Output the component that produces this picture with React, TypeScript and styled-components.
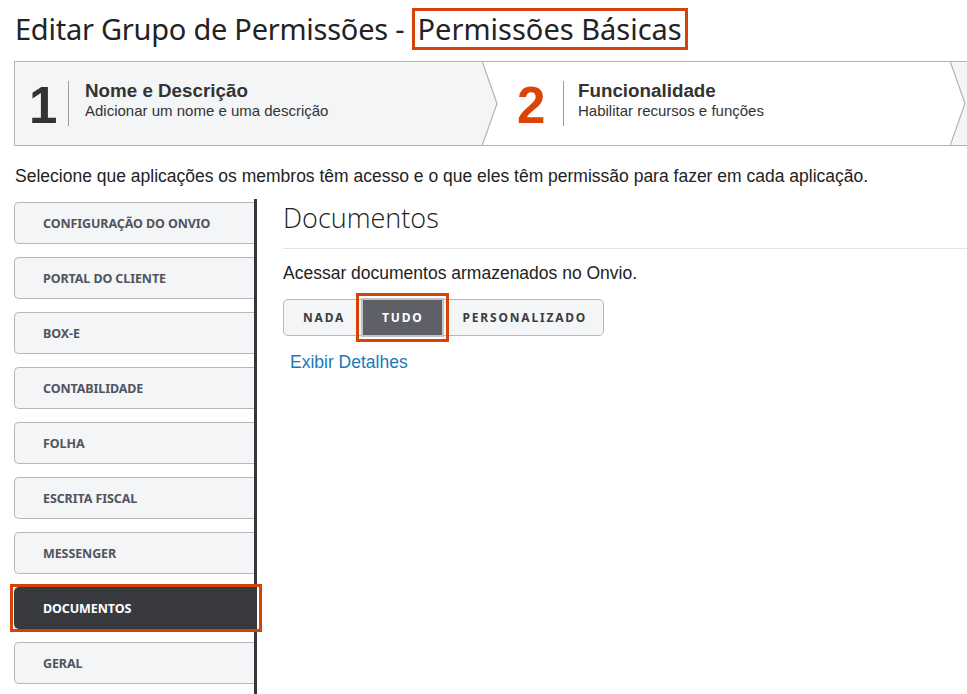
import React from "react";
import styled, { createGlobalStyle } from "styled-components";

const Global = createGlobalStyle`
  html, body { margin: 0; padding: 0; background: #fff; }
  body { font-family: "Liberation Sans", Arial, sans-serif; color: #222; }
  * { box-sizing: border-box; }
`;

const ORANGE = "#d64309";

const Page = styled.div`
  padding: 8px 0 0 14px;
  width: 967px;
  height: 694px;
  overflow: hidden;
`;

const Title = styled.h1`
  margin: 0;
  padding-left: 1px;
  font-family: "Noto Sans", "Open Sans", sans-serif;
  font-weight: 400;
  font-size: 29px;
  letter-spacing: -0.25px;
  line-height: 36px;
  color: #232323;
  white-space: nowrap;
`;

const Highlight = styled.span`
  display: inline-block;
  border: 3px solid ${ORANGE};
  padding: 0 3px;
  letter-spacing: 0;
  line-height: 36px;
`;

const Stepper = styled.div`
  display: flex;
  margin-top: 11px;
  height: 85px;
  border-top: 1px solid #b3b3b6;
  border-bottom: 1px solid #b3b3b6;
  border-left: 1px solid #b3b3b6;
`;

const Step = styled.div<{ $bg: string; $width?: number; $pad: number }>`
  display: flex;
  align-items: center;
  background: ${(p) => p.$bg};
  ${(p) => (p.$width ? `width: ${p.$width}px; flex: none;` : "flex: 1;")}
  padding-left: ${(p) => p.$pad}px;
`;

const StepNumber = styled.div<{ $color: string; $w: number }>`
  width: ${(p) => p.$w}px;
  flex: none;
  font-family: "Liberation Sans", Arial, sans-serif;
  font-weight: 700;
  font-size: 51px;
  line-height: 1;
  color: ${(p) => p.$color};
  margin-top: 3px;
`;

const StepDivider = styled.div<{ $gap: number }>`
  width: 1px;
  height: 45px;
  background: #9c9c9c;
  margin-right: ${(p) => p.$gap}px;
`;

const StepText = styled.div`
  display: flex;
  flex-direction: column;
  margin-top: -8px;
`;

const StepTitle = styled.div`
  font-weight: 700;
  font-size: 18.8px;
  line-height: 21px;
  color: #333;
`;

const StepSub = styled.div`
  font-size: 15px;
  line-height: 19px;
  color: #333;
`;

const Chevron = styled.svg`
  display: block;
  flex: none;
  width: 16px;
  height: 83px;
`;

const ChevronSep = ({ left, right }: { left: string; right: string }) => (
  <Chevron viewBox="0 0 16 83" preserveAspectRatio="none">
    <rect x="0" y="0" width="16" height="83" fill={right} />
    <polygon points="0,0 15,41.5 0,83" fill={left} />
    <polyline points="0,-1 15,41.5 0,84" fill="none" stroke="#b3b3b6" strokeWidth="1.2" />
  </Chevron>
);

const Intro = styled.p`
  margin: 20px 0 0 1px;
  font-size: 17.5px;
  line-height: 20px;
  color: #222;
  white-space: nowrap;
`;

const Body = styled.div`
  display: flex;
  margin-top: 13px;
`;

const Sidebar = styled.nav`
  display: flex;
  flex-direction: column;
  gap: 13px;
  width: 243px;
  flex: none;
  padding: 3px 0 20px;
  border-right: 3px solid #37383d;
`;

const NavItem = styled.div<{ $active?: boolean }>`
  position: relative;
  height: 42px;
  display: flex;
  align-items: center;
  padding-left: 28px;
  border: 1px solid ${(p) => (p.$active ? "#37383d" : "#b6b7bb")};
  border-right: none;
  border-radius: 5px 0 0 5px;
  background: ${(p) => (p.$active ? "#393a3f" : "#f4f5f7")};
  color: ${(p) => (p.$active ? "#fff" : "#51545e")};
  font-family: "Noto Sans", "Open Sans", sans-serif;
  font-weight: 700;
  font-size: 12.5px;
  letter-spacing: -0.1px;
  text-transform: uppercase;
  ${(p) =>
    p.$active
      ? `&::after {
    content: "";
    position: absolute;
    top: -4px;
    bottom: -4px;
    left: -5px;
    right: -8px;
    border: 3px solid ${ORANGE};
    z-index: 2;
    pointer-events: none;
  }`
      : ""}
`;

const Main = styled.section`
  flex: 1;
  padding-left: 26px;
`;

const Heading = styled.h2`
  margin: 0;
  padding-bottom: 11px;
  border-bottom: 1px solid #e3e3e5;
  font-family: "Open Sans", "Noto Sans", sans-serif;
  font-weight: 300;
  font-size: 27px;
  line-height: 38px;
  color: #222;
`;

const Desc = styled.p`
  margin: 14px 0 0;
  font-size: 17.5px;
  line-height: 20px;
  color: #222;
`;

const Segmented = styled.div`
  display: inline-flex;
  margin-top: 16px;
  height: 37px;
  border: 1px solid #b6b7bb;
  border-radius: 5px;
  background: #f4f5f7;
`;

const Segment = styled.button<{ $active?: boolean }>`
  position: relative;
  display: flex;
  align-items: center;
  padding: 0 16px 0 19px;
  margin: 0;
  border: none;
  background: ${(p) => (p.$active ? "#5e5f67" : "transparent")};
  box-shadow: ${(p) => (p.$active ? "inset 0 0 0 2px #c3c3c7" : "none")};
  color: ${(p) => (p.$active ? "#fff" : "#3b3c42")};
  font-family: "Noto Sans", "Open Sans", sans-serif;
  font-weight: 700;
  font-size: 12px;
  letter-spacing: 1.8px;
  cursor: pointer;
  ${(p) =>
    p.$active
      ? `margin: -2px 0; padding: 0 20px 0 21px; &::after {
    content: "";
    position: absolute;
    top: -5px;
    bottom: -5px;
    left: -5px;
    right: -5px;
    border: 3px solid ${ORANGE};
    pointer-events: none;
  }`
      : ""}
`;

const DetailsLink = styled.a`
  display: block;
  margin: 16px 0 0 7px;
  font-size: 17.5px;
  line-height: 20px;
  color: #1a79b9;
  text-decoration: none;
`;

const items = [
  "Configuração do Onvio",
  "Portal do Cliente",
  "Box-e",
  "Contabilidade",
  "Folha",
  "Escrita Fiscal",
  "Messenger",
  "Documentos",
  "Geral",
];

export default function App() {
  return (
    <>
      <Global />
      <Page>
        <Title>
          Editar Grupo de Permissões - <Highlight>Permissões Básicas</Highlight>
        </Title>
        <Stepper>
          <Step $bg="#f4f5f7" $width={467} $pad={14}>
            <StepNumber $color="#333" $w={39}>1</StepNumber>
            <StepDivider $gap={16} />
            <StepText>
              <StepTitle>Nome e Descrição</StepTitle>
              <StepSub>Adicionar um nome e uma descrição</StepSub>
            </StepText>
          </Step>
          <ChevronSep left="#f4f5f7" right="#ffffff" />
          <Step $bg="#ffffff" $width={452} $pad={19}>
            <StepNumber $color="#dc4405" $w={46}>2</StepNumber>
            <StepDivider $gap={14} />
            <StepText>
              <StepTitle>Funcionalidade</StepTitle>
              <StepSub>Habilitar recursos e funções</StepSub>
            </StepText>
          </Step>
          <ChevronSep left="#ffffff" right="#f4f5f7" />
          <Step $bg="#f4f5f7" $pad={0} />
        </Stepper>
        <Intro>
          Selecione que aplicações os membros têm acesso e o que eles têm permissão para fazer em cada aplicação.
        </Intro>
        <Body>
          <Sidebar>
            {items.map((it) => (
              <NavItem key={it} $active={it === "Documentos"}>
                {it}
              </NavItem>
            ))}
          </Sidebar>
          <Main>
            <Heading>Documentos</Heading>
            <Desc>Acessar documentos armazenados no Onvio.</Desc>
            <Segmented>
              <Segment>NADA</Segment>
              <Segment $active>TUDO</Segment>
              <Segment>PERSONALIZADO</Segment>
            </Segmented>
            <DetailsLink href="#">Exibir Detalhes</DetailsLink>
          </Main>
        </Body>
      </Page>
    </>
  );
}
